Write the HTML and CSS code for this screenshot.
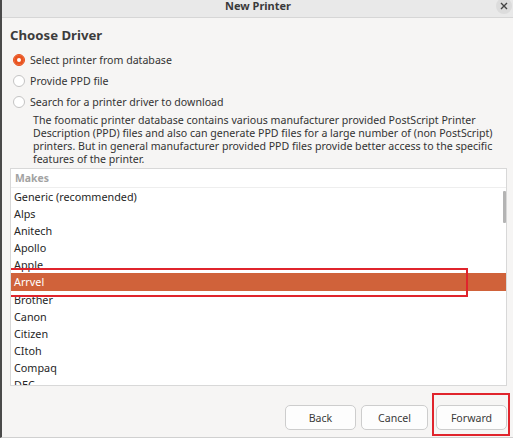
FILE: index.html
```html
<!DOCTYPE html>
<html>
<head>
    <title>New Printer</title>
    <link rel="stylesheet" href="styles.css">
</head>
<body>
    <div class="window">
        <div class="titlebar">
            <span></span>
            <span class="title">New Printer</span>
            <span class="close">
                <svg width="8" height="8" viewBox="0 0 8 8"><path d="M1 1L7 7M7 1L1 7" stroke="#444" stroke-width="1.4"/></svg>
            </span>
        </div>

        <div class="content">
            <h1 class="heading">Choose Driver</h1>

            <div class="options">
                <label class="option"><span class="radio checked"></span>Select printer from database</label>
                <label class="option"><span class="radio"></span>Provide PPD file</label>
                <label class="option"><span class="radio"></span>Search for a printer driver to download</label>
            </div>

            <p class="desc">The foomatic printer database contains various manufacturer provided PostScript Printer Description (PPD) files and also can generate PPD files for a large number of (non PostScript) printers. But in general manufacturer provided PPD files provide better access to the specific features of the printer.</p>

            <div class="list">
                <div class="list-head">Makes</div>
                <div class="row">Generic (recommended)</div>
                <div class="row">Alps</div>
                <div class="row">Anitech</div>
                <div class="row">Apollo</div>
                <div class="row">Apple</div>
                <div class="row selected">Arrvel</div>
                <div class="row">Brother</div>
                <div class="row">Canon</div>
                <div class="row">Citizen</div>
                <div class="row">CItoh</div>
                <div class="row">Compaq</div>
                <div class="row">DEC</div>
                <div class="scroll-thumb"></div>
                <div class="mark mark-row"></div>
            </div>

            <div class="buttons">
                <button class="btn">Back</button>
                <button class="btn">Cancel</button>
                <button class="btn btn-forward">Forward<span class="mark mark-btn"></span></button>
            </div>
        </div>
    </div>
</body>
</html>
```

FILE: styles.css
```css
html, body { margin: 0; padding: 0; }
body { width: 513px; height: 438px; overflow: hidden; font-family: "Noto Sans", "DejaVu Sans", sans-serif; color: #333; background: #f6f5f4; }
.window { height: 438px; border-left: 2px solid #4a4a4a; box-sizing: border-box; border-bottom: 1px solid #d0d0d0; }
.titlebar { height: 17px; display: grid; grid-template-columns: 1fr auto 1fr; align-items: center; background: #e9e9e9; border-bottom: 1px solid #d6d6d6; }
.title { font-size: 11px; font-weight: bold; color: #3a3a3a; line-height: 17px; margin-top: -7px; margin-left: 1px; }
.close { justify-self: end; width: 16px; height: 16px; margin-right: 1px; margin-top: -6px; border-radius: 50%; background: #dcdcdc; display: flex; align-items: center; justify-content: center; }
.content { padding: 0 6px 0 7px; }
.heading { margin: 8px 0 0 1px; font-size: 13.2px; font-weight: bold; color: #3c3c3c; line-height: 18px; }
.options { margin-top: 6px; display: flex; flex-direction: column; gap: 2px; }
.option { display: flex; align-items: center; height: 19px; font-size: 10.6px; color: #333; }
.radio { width: 12px; height: 12px; border: 1px solid #c4c4c4; border-radius: 50%; background: #fff; margin: 0 5px 0 4px; box-sizing: border-box; flex: none; }
.radio.checked { background: #e95420; border-color: #e95420; box-shadow: inset 0 0 0 3px #e95420, inset 0 0 0 6px #fff; }
.desc { margin: 3px 0 0 24px; font-size: 10.6px; line-height: 13px; color: #333; }
.list { position: relative; margin-top: 2px; height: 216px; overflow: hidden; background: #fff; border: 1px solid #d8d8d8; margin-left: 1px; }
.list-head { height: 18px; line-height: 18px; padding-left: 4px; font-size: 10.4px; font-weight: bold; color: #a2a2a2; border-bottom: 1px solid #eee; }
.row { height: 17px; line-height: 17px; padding-left: 3px; font-size: 10.8px; color: #262626; }
.row.selected { background: #d0623a; color: #fff; height: 18px; line-height: 18px; }
.scroll-thumb { position: absolute; right: 0; top: 22px; width: 3px; height: 32px; background: #b4b4b4; border-radius: 1px; }
.mark { position: absolute; border: 2px solid #e0242c; box-sizing: border-box; pointer-events: none; }
.mark-row { left: -4px; top: 99px; width: 461px; height: 29px; }
.buttons { display: flex; justify-content: flex-end; gap: 5px; margin-top: 19px; }
.btn { height: 25px; width: 71px; font-family: inherit; font-size: 10.6px; color: #3a3a3a; background: #fdfdfd; border: 1px solid #cdcdcd; border-radius: 5px; }
.btn:nth-child(2) { width: 67px; margin-right: 3px; }
.btn-forward { position: relative; }
.mark-btn { left: -5px; top: -13px; width: 78px; height: 43px; }
```
